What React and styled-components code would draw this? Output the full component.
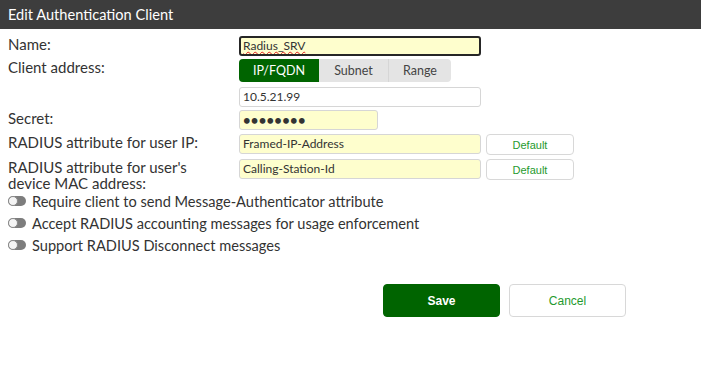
import React from "react";
import styled, { createGlobalStyle } from "styled-components";

const Global = createGlobalStyle`
  html, body { margin: 0; padding: 0; background: #fff; }
  body { font-family: Lato, "Noto Sans", sans-serif; color: #333; }
`;

const Header = styled.div`
  height: 29px;
  background: #3d3d3d;
  color: #fff;
  font-size: 14.6px;
  line-height: 29px;
  padding-left: 8px;
`;

const Form = styled.div`
  padding: 6px 8px 0 8px;
  display: flex;
  flex-direction: column;
`;

const Row = styled.div`
  display: flex;
  align-items: flex-start;
  margin-top: ${(p) => p.$mt || 0}px;
`;

const Label = styled.div`
  width: 231px;
  flex: none;
  font-size: 15px;
  line-height: 16px;
  color: #333;
`;

const Input = styled.div`
  box-sizing: border-box;
  width: ${(p) => p.$w}px;
  height: 20px;
  background: ${(p) => (p.$yellow ? "#fefecd" : "#fff")};
  border: ${(p) => (p.$focus ? "2px solid #262626" : "1px solid #d6d6d6")};
  border-radius: 3px;
  font-size: 12px;
  line-height: ${(p) => (p.$focus ? 16 : 18)}px;
  padding-left: ${(p) => (p.$focus ? 2 : 3)}px;
  color: #333;
  white-space: nowrap;
  overflow: hidden;
`;

const Squiggle = styled.span`
  text-decoration: underline wavy #e01b1b;
  text-decoration-thickness: 1px;
  text-underline-offset: 1px;
`;

const Dots = styled.span`
  font-size: 13px;
  letter-spacing: 0.3px;
  font-weight: bold;
`;

const Segmented = styled.div`
  display: flex;
  height: 23px;
  background: #e4e4e4;
  border-radius: 4px;
`;

const Segment = styled.div`
  width: ${(p) => p.$w}px;
  box-sizing: border-box;
  display: flex;
  align-items: center;
  justify-content: center;
  font-size: 12.5px;
  color: ${(p) => (p.$active ? "#fff" : "#444")};
  background: ${(p) => (p.$active ? "#006400" : "transparent")};
  border-radius: ${(p) => (p.$active ? "4px 0 0 4px" : "0")};
  border-left: ${(p) => (p.$sep ? "1px solid #d6d6d6" : "none")};
`;

const Controls = styled.div`
  display: flex;
  gap: 5px;
`;

const SmallButton = styled.div`
  box-sizing: border-box;
  width: 88px;
  height: 21px;
  border: 1px solid #d8d8d8;
  border-radius: 4px;
  background: #fff;
  color: #1f9a2e;
  font-family: "Liberation Sans", Arial, sans-serif;
  font-size: 11px;
  display: flex;
  align-items: center;
  justify-content: center;
`;

const ToggleList = styled.div`
  display: flex;
  flex-direction: column;
  margin-top: -1px;
`;

const ToggleRow = styled.div`
  display: flex;
  align-items: center;
  height: 22px;
  font-size: 14.6px;
  color: #333;
  gap: 6px;
`;

const Switch = styled.span`
  position: relative;
  width: 18px;
  height: 10px;
  border-radius: 5px;
  background: #7d7d7d;
  flex: none;
  &::before {
    content: "";
    position: absolute;
    left: 0;
    top: 0;
    width: 10px;
    height: 10px;
    box-sizing: border-box;
    border-radius: 50%;
    background: #f4f4f4;
    border: 1px solid #8a8a8a;
  }
`;

const Footer = styled.div`
  display: flex;
  justify-content: flex-end;
  gap: 9px;
  padding-right: 75px;
  margin-top: 28px;
`;

const BigButton = styled.div`
  box-sizing: border-box;
  width: 117px;
  height: 33px;
  border-radius: 4px;
  display: flex;
  align-items: center;
  justify-content: center;
  font-family: "Liberation Sans", Arial, sans-serif;
  font-size: 12px;
  font-weight: ${(p) => (p.$primary ? "bold" : "normal")};
  background: ${(p) => (p.$primary ? "#006400" : "#fff")};
  color: ${(p) => (p.$primary ? "#fff" : "#1f9a2e")};
  border: 1px solid ${(p) => (p.$primary ? "#006400" : "#d8d8d8")};
`;

const toggles = [
  "Require client to send Message-Authenticator attribute",
  "Accept RADIUS accounting messages for usage enforcement",
  "Support RADIUS Disconnect messages",
];

export default function App() {
  return (
    <>
      <Global />
      <Header>Edit Authentication Client</Header>
      <Form>
        <Row $mt={1}>
          <Label>Name:</Label>
          <Input $w={242} $yellow $focus>
            <Squiggle>Radius_SRV</Squiggle>
          </Input>
        </Row>
        <Row $mt={3}>
          <Label>Client address:</Label>
          <Segmented>
            <Segment $w={80} $active>IP/FQDN</Segment>
            <Segment $w={69}>Subnet</Segment>
            <Segment $w={63} $sep>Range</Segment>
          </Segmented>
        </Row>
        <Row $mt={5}>
          <Label />
          <Input $w={242}>10.5.21.99</Input>
        </Row>
        <Row $mt={3}>
          <Label>Secret:</Label>
          <Input $w={139} $yellow>
            <Dots>••••••••</Dots>
          </Input>
        </Row>
        <Row $mt={4}>
          <Label>RADIUS attribute for user IP:</Label>
          <Controls>
            <Input $w={242} $yellow>Framed-IP-Address</Input>
            <SmallButton>Default</SmallButton>
          </Controls>
        </Row>
        <Row $mt={4}>
          <Label>
            RADIUS attribute for user's
            <br />
            device MAC address:
          </Label>
          <Controls>
            <Input $w={242} $yellow>Calling-Station-Id</Input>
            <SmallButton>Default</SmallButton>
          </Controls>
        </Row>
        <ToggleList>
          {toggles.map((t) => (
            <ToggleRow key={t}>
              <Switch />
              {t}
            </ToggleRow>
          ))}
        </ToggleList>
      </Form>
      <Footer>
        <BigButton $primary>Save</BigButton>
        <BigButton>Cancel</BigButton>
      </Footer>
    </>
  );
}
